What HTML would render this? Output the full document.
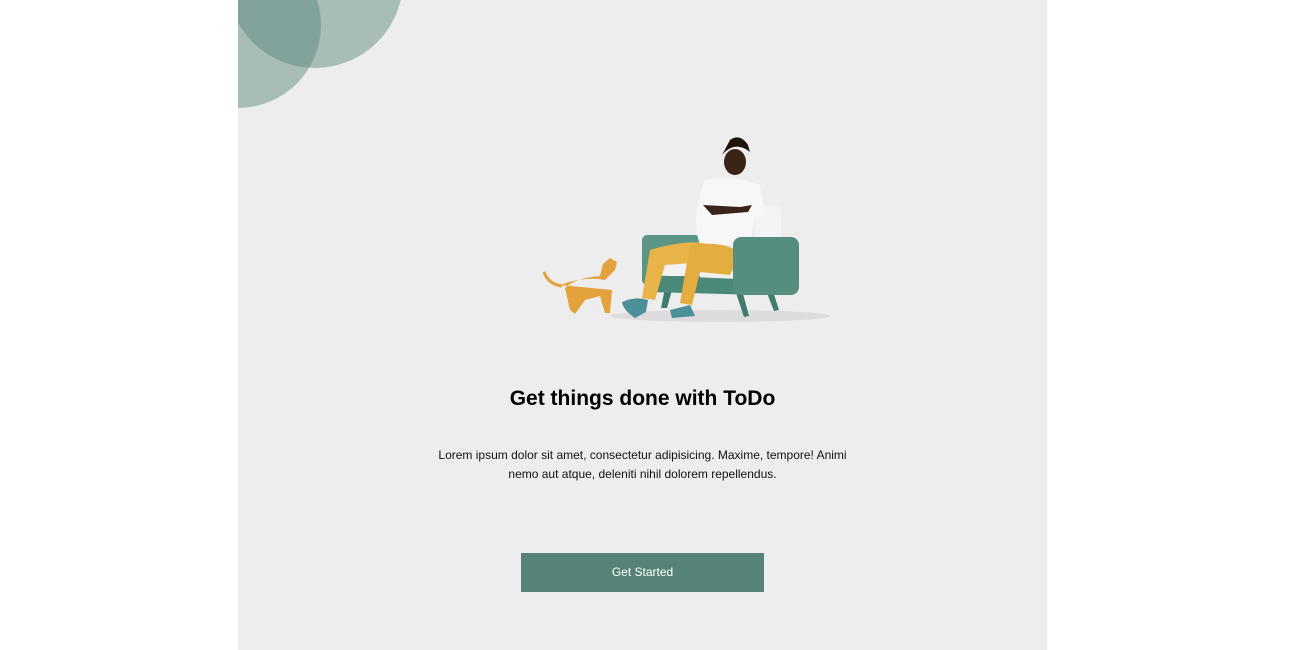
<!DOCTYPE html>
<html><head><meta charset="utf-8"><style>
html,body{margin:0;padding:0;background:#fff;}
.panel{position:absolute;left:238px;top:0;width:809px;height:650px;background:#ededed;overflow:hidden;font-family:"Liberation Sans",sans-serif;}
.c{position:absolute;border-radius:50%;background:rgba(85,131,119,0.45);}
h1{position:absolute;left:0;width:809px;top:387px;margin:0;text-align:center;font-size:21px;font-weight:bold;color:#000;}
p{position:absolute;left:195px;width:419px;top:446px;margin:0;text-align:center;font-size:12px;line-height:19px;color:#111;}
.btn{position:absolute;left:283px;top:553px;width:243px;height:39px;background:#558377;color:#fff;font-size:12px;line-height:39px;text-align:center;}
svg{position:absolute;left:0;top:0;}
</style></head><body>
<div class="panel">
<div class="c" style="left:-83px;top:-58px;width:166px;height:166px"></div>
<div class="c" style="left:-11px;top:-108px;width:176px;height:176px"></div>
<svg width="809" height="650" viewBox="238 0 809 650">
<ellipse cx="720" cy="316" rx="110" ry="6" fill="#dcdcdc"/>
<path d="M665 288 L661 308 L667 308 L672 290Z" fill="#3f7c6e"/>
<path d="M735 290 L744 317 L749 316 L742 290Z" fill="#3f7c6e"/>
<path d="M765 288 L774 311 L779 310 L772 288Z" fill="#3f7c6e"/>
<rect x="642" y="235" width="58" height="50" rx="5" fill="#5a9585"/>
<rect x="755" y="206" width="26" height="40" rx="5" fill="#f4f4f4"/>
<rect x="650" y="256" width="100" height="20" rx="4" fill="#f2f2f2"/>
<path d="M645 275 L760 280 L760 295 L650 292Z" fill="#4a8878"/>
<path d="M705 180 Q735 175 760 185 L765 215 L755 215 L750 245 L700 245 Q690 215 705 180Z" fill="#f7f7f7"/>
<path d="M703 205 L712 215 L748 212 L752 205 L740 207Z" fill="#3a2418"/>
<ellipse cx="735" cy="162" rx="11" ry="13" fill="#3a2418"/>
<path d="M722 155 Q735 140 750 152 L748 145 Q740 133 730 140Z" fill="#1d1410"/>
<path d="M650 250 Q690 238 710 245 L705 262 L665 265 L655 300 L642 298Z" fill="#e9b34a"/>
<path d="M690 245 Q730 240 740 255 L730 275 L700 272 L692 305 L680 303Z" fill="#e4ad3f"/>
<rect x="733" y="237" width="66" height="58" rx="8" fill="#558e7e"/>
<path d="M622 302 Q635 296 648 300 L646 312 L635 318 Q623 310 622 302Z" fill="#4b8f98"/>
<path d="M670 310 L690 305 L695 316 L672 318Z" fill="#4b8f98"/>
<path d="M560 285 Q585 276 605 280 L615 270 L617 262 L610 258 L603 264 L600 276 Q575 278 565 288 L570 310 L575 314 L585 300 L600 296 L605 313 L610 313 L612 290Z" fill="#e3a23c"/>
<path d="M562 286 Q548 284 544 272" stroke="#e3a23c" stroke-width="3" fill="none"/>
</svg>
<h1>Get things done with ToDo</h1>
<p>Lorem ipsum dolor sit amet, consectetur adipisicing. Maxime, tempore! Animi nemo aut atque, deleniti nihil dolorem repellendus.</p>
<div class="btn">Get Started</div>
</div>
</body></html>
